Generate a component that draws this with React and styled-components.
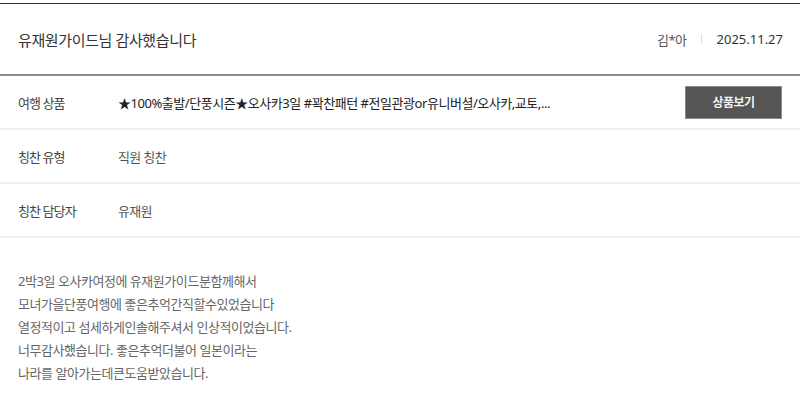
import React from "react";
import styled, { createGlobalStyle } from "styled-components";

const Global = createGlobalStyle`
  html, body { margin: 0; padding: 0; background: #fff; }
  body { font-family: "Noto Sans", "Noto Sans CJK KR", sans-serif; }
`;

const Page = styled.div`
  padding-top: 3px;
  width: 800px;
`;

const Header = styled.div`
  display: flex;
  align-items: center;
  justify-content: space-between;
  height: 70px;
  padding: 0 17px 0 18px;
  border-top: 1px solid #333;
  border-bottom: 2px solid #8c8c8c;
`;

const Title = styled.h2`
  margin: 0;
  font-size: 15px;
  font-weight: 400;
  color: #333;
  letter-spacing: -0.025em;
`;

const Meta = styled.div`
  display: flex;
  align-items: center;
  font-size: 13px;
  color: #555;
`;

const Writer = styled.span`
  letter-spacing: -0.04em;
`;

const Sep = styled.span`
  width: 1px;
  height: 10px;
  background: #ddd;
  margin: 0 15px 0 14px;
`;

const DateText = styled.span`
  font-weight: 400;
  color: #333;
  letter-spacing: 0;
`;

const Row = styled.div`
  display: flex;
  align-items: center;
  height: 52px;
  padding: 0 18px;
  border-bottom: 2px solid #eeeeee;
  font-size: 13px;
`;

const Label = styled.div`
  width: 100px;
  flex: none;
  color: #444;
  letter-spacing: -0.07em;
`;

const Value = styled.div`
  flex: 1;
  min-width: 0;
  color: ${(p) => (p.$strong ? "#222" : "#555")};
  letter-spacing: ${(p) => (p.$strong ? "-0.035em" : "-0.05em")};
  white-space: nowrap;
  overflow: hidden;
`;

const Button = styled.button`
  flex: none;
  width: 97px;
  height: 33px;
  background: #555;
  border: 1px solid #8a8a8a;
  color: #f2f2f2;
  font-family: inherit;
  font-size: 12px;
  font-weight: 700;
  letter-spacing: -0.04em;
  cursor: pointer;
`;

const Body = styled.div`
  padding: 32px 18px;
  font-size: 13px;
  line-height: 23px;
  color: #666;
  letter-spacing: -0.035em;
`;

export default function App() {
  return (
    <Page>
      <Global />
      <Header>
        <Title>유재원가이드님 감사했습니다</Title>
        <Meta>
          <Writer>김*아</Writer>
          <Sep />
          <DateText>2025.11.27</DateText>
        </Meta>
      </Header>
      <Row>
        <Label>여행 상품</Label>
        <Value $strong>
          ★100%출발/단풍시즌★오사카3일 #꽉찬패턴 #전일관광or유니버셜/오사카,교토,...
        </Value>
        <Button>상품보기</Button>
      </Row>
      <Row>
        <Label>칭찬 유형</Label>
        <Value>직원 칭찬</Value>
      </Row>
      <Row>
        <Label>칭찬 담당자</Label>
        <Value>유재원</Value>
      </Row>
      <Body>
        2박3일 오사카여정에 유재원가이드분함께해서
        <br />
        모녀가을단풍여행에 좋은추억간직할수있었습니다
        <br />
        열정적이고 섬세하게인솔해주셔서 인상적이었습니다.
        <br />
        너무감사했습니다. 좋은추억더불어 일본이라는
        <br />
        나라를 알아가는데큰도움받았습니다.
      </Body>
    </Page>
  );
}
